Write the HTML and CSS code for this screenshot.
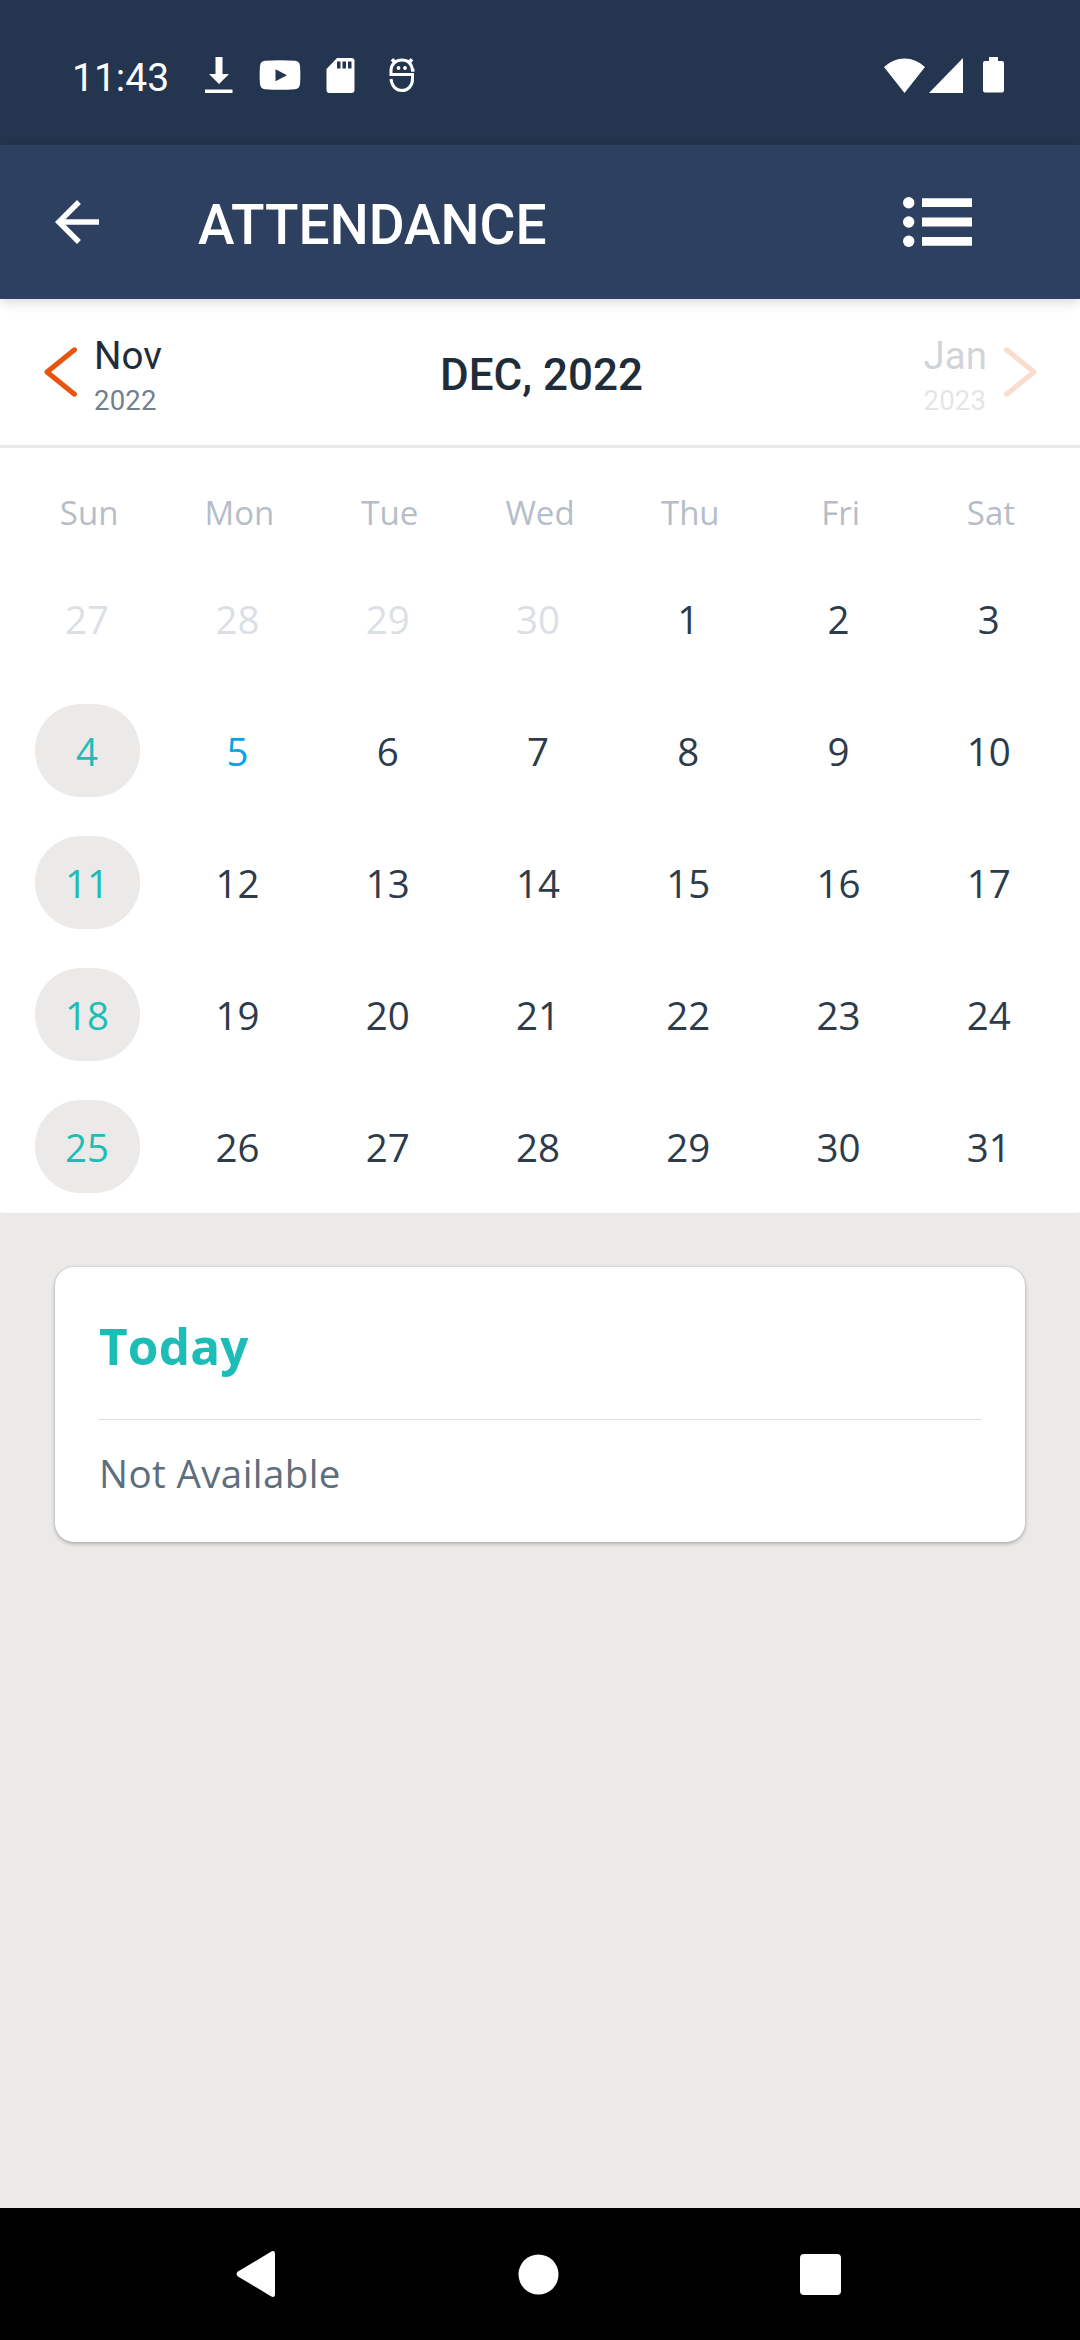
FILE: index.html
```html
<!DOCTYPE html>
<html lang="en">
<head>
<meta charset="utf-8">
<title>Attendance</title>
<link rel="stylesheet" href="styles.css">
</head>
<body>
<div class="screen">
  <header class="status-bar">
    <span class="clock">11:43</span>
    <svg class="icon-download" width="28" height="36" viewBox="0 0 28 36"><path d="M10.500 0h7v17H24L14 27 4 17h6.500zM0 32.500h27.500v3.500H0z"/></svg>
    <svg class="icon-video" width="42" height="30" viewBox="0 0 42 30"><path fill-rule="evenodd" d="M6 .8Q21-.4 36 .8Q40.500 1.200 41 6Q41.700 15 41 24Q40.500 28.800 36 29.200Q21 30.400 6 29.200Q1.500 28.800 1 24Q.3 15 1 6Q1.500 1.200 6 .8zM16.500 9.300v12L28 15.300z"/></svg>
    <svg class="icon-card" width="29" height="35" viewBox="0 0 29 35"><path fill-rule="evenodd" d="M11 0h14.500q3 0 3 3v29q0 3-3 3H3.500q-3 0-3-3V11zM11 3.500v7h3.500v-7zM16.500 3.500v7H20v-7zM22 3.500v7h3.500v-7z"/></svg>
    <svg class="icon-bot" width="26" height="36" viewBox="0 0 26 36"><g fill="none" stroke="#fff" stroke-width="3"><path d="M25.500 13.200h-2C22.500 6 19 3 13 3S2 7 2 13.500V17.500H23.500V22C23.500 29 19 33.500 13 33.500S2.800 29 2 22"/><path d="M6 5.500 3 2.200M20 5.500 23 2.200" stroke-width="3.500"/></g><circle cx="9.500" cy="11" r="1.900"/><circle cx="16" cy="11" r="1.900"/></svg>
    <span class="spacer"></span>
    <svg class="icon-wifi" width="42" height="35" viewBox="0 0 42 35"><path d="M0 9Q9 .5 20.500.5T41 9L20.500 35z"/></svg>
    <svg class="icon-signal" width="34" height="35" viewBox="0 0 34 35"><path d="M34 0v35H0z"/></svg>
    <svg class="icon-battery" width="21" height="36" viewBox="0 0 21 36"><path d="M6 0h9v4h4q2 0 2 2v27.500q0 2-2 2H2q-2 0-2-2V6q0-2 2-2h4z"/></svg>
  </header>

  <div class="app-bar">
    <svg class="icon-back" width="66" height="66" viewBox="0 0 24 24"><path d="M20 11H7.830l5.590-5.590L12 4l-8 8 8 8 1.410-1.410L7.830 13H20v-2z"/></svg>
    <h1 class="title">ATTENDANCE</h1>
    <svg class="icon-list" width="70" height="50" viewBox="0 0 70 50"><circle cx="5.700" cy="5.700" r="5.700"/><circle cx="5.700" cy="25" r="5.700"/><circle cx="5.700" cy="44.300" r="5.700"/><path d="M19 1.200h50V10H19zM19 20.600h50v8.800H19zM19 40h50v8.800H19z"/></svg>
  </div>

  <nav class="month-nav">
    <div class="month-step">
      <svg width="35" height="52" viewBox="0 0 35 52"><path class="chevron" d="M31.500 3.800 4 26l27.500 22.200"/></svg>
      <div class="month-label"><span class="month">Nov</span><span class="year">2022</span></div>
    </div>
    <h2 class="current">DEC, 2022</h2>
    <div class="month-step disabled">
      <div class="month-label"><span class="month">Jan</span><span class="year">2023</span></div>
      <svg width="35" height="52" viewBox="0 0 35 52"><path class="chevron" d="M3.500 3.800 31 26 3.500 48.200"/></svg>
    </div>
  </nav>

  <section class="calendar">
    <div class="weekdays"><span>Sun</span><span>Mon</span><span>Tue</span><span>Wed</span><span>Thu</span><span>Fri</span><span>Sat</span></div>
    <div class="days">
      <span class="other">27</span><span class="other">28</span><span class="other">29</span><span class="other">30</span><span>1</span><span>2</span><span>3</span>
      <span class="holiday">4</span><span class="today">5</span><span>6</span><span>7</span><span>8</span><span>9</span><span>10</span>
      <span class="holiday">11</span><span>12</span><span>13</span><span>14</span><span>15</span><span>16</span><span>17</span>
      <span class="holiday">18</span><span>19</span><span>20</span><span>21</span><span>22</span><span>23</span><span>24</span>
      <span class="holiday">25</span><span>26</span><span>27</span><span>28</span><span>29</span><span>30</span><span>31</span>
    </div>
  </section>

  <main class="details">
    <article class="card">
      <h3 class="card-title">Today</h3>
      <p class="card-text">Not Available</p>
    </article>
  </main>

  <footer class="system-nav">
    <svg width="40" height="46" viewBox="0 0 40 46"><path d="M34.500 1Q39 -1.500 39 3v40q0 4.500-4.500 2L2 25.500q-3-2.500 0-5z"/></svg>
    <svg width="41" height="41" viewBox="0 0 41 41"><circle cx="20.500" cy="20.500" r="20"/></svg>
    <svg width="41" height="41" viewBox="0 0 41 41"><rect width="41" height="41" rx="4"/></svg>
  </footer>
</div>
</body>
</html>
```
FILE: styles.css
```css
* {
  box-sizing: border-box;
}

body,
h1,
h2,
h3,
p {
  margin: 0;
}

body {
  font-family: Roboto, sans-serif;
}

svg {
  display: block;
  flex: none;
  fill: #fff;
}

.screen {
  display: flex;
  flex-direction: column;
  width: 1080px;
  height: 2340px;
  background: #ebeae8;
}

.status-bar {
  display: flex;
  align-items: center;
  height: 145px;
  padding: 5px 76px 0 72px;
  background: #24354f;
}

.clock {
  width: 133px;
  padding-top: 5px;
  color: #fff;
  font-size: 39px;
  line-height: 46px;
}

.icon-video {
  margin-left: 26px;
}

.icon-card {
  margin-left: 25px;
}

.icon-bot {
  margin-left: 34px;
}

.spacer {
  flex: 1;
}

.icon-signal {
  margin: 0 20px 0 3px;
}

.app-bar {
  display: flex;
  position: relative;
  align-items: center;
  height: 154px;
  padding: 0 107px 0 44px;
  background: #2d4060;
  box-shadow: 0 2px 12px rgba(0, 0, 0, 0.18);
}

.title {
  flex: 1;
  padding: 6px 0 0 88px;
  color: #fff;
  font-size: 55px;
  font-weight: 500;
  line-height: 64px;
}

.month-nav {
  display: grid;
  grid-template-columns: 1fr auto 1fr;
  align-items: start;
  height: 149px;
  padding: 0 42px 0 43px;
  border-bottom: 3px solid #e9e9ea;
  background: #fff;
}

.month-step {
  display: flex;
  gap: 16px;
  padding-top: 35px;
}

.month-step svg {
  margin-top: 12px;
}

.month-step.disabled {
  justify-content: flex-end;
  opacity: 0.2;
}

.month-label {
  display: flex;
  flex-direction: column;
}

.month {
  color: #1f2d3a;
  font-size: 38.500px;
  line-height: 44px;
}

.year {
  color: #708090;
  font-size: 27.500px;
  letter-spacing: 0.2px;
  line-height: 45px;
}

.disabled .year {
  color: #7a828c;
}

.chevron {
  fill: none;
  stroke: #e65410;
  stroke-width: 5;
  stroke-linecap: round;
  stroke-linejoin: round;
}

.current {
  padding: 50px 0 0 2px;
  color: #1f2d3a;
  font-size: 44px;
  font-weight: 500;
  line-height: 52px;
}

.calendar {
  height: 765px;
  padding-top: 43px;
  border-radius: 0 0 15px 15px / 0 0 1px 1px;
  background: #fff;
  font-family: "Open Sans", sans-serif;
}

.weekdays,
.days {
  display: grid;
  grid-template-columns: repeat(7, 150.300px);
  justify-content: center;
  text-align: center;
}

.weekdays {
  color: #b6bdc9;
  font-size: 33px;
  line-height: 44px;
}

.days {
  grid-auto-rows: 93px;
  row-gap: 39px;
  padding: 37px 4px 0 0;
  color: #2d3b4a;
  font-size: 38.500px;
  line-height: 95px;
}

.days span {
  width: 105px;
  height: 93px;
  justify-self: center;
}

.days .other {
  color: #dbe0e6;
}

.days .today {
  color: #08a3e8;
}

.days .holiday {
  border-radius: 46px;
  background: #ebeae9;
  color: #1fbcb5;
}

.details {
  flex: 1;
  padding: 54px 55px;
  font-family: "Open Sans", sans-serif;
}

.card {
  height: 275px;
  padding: 46px 44px 0;
  border-radius: 19px;
  background: #fff;
  box-shadow: 0 2px 4px rgba(0, 0, 0, 0.24), 0 0 3px rgba(0, 0, 0, 0.1);
}

.card-title {
  height: 107px;
  border-bottom: 1px solid #dedfe0;
  color: #1cbdb6;
  font-size: 49.500px;
  font-weight: 700;
  letter-spacing: 0.2px;
  line-height: 66px;
}

.card-text {
  padding-top: 27px;
  color: #5f6e7c;
  font-size: 38.500px;
  letter-spacing: 0.400px;
  line-height: 52px;
}

.system-nav {
  display: flex;
  align-items: center;
  justify-content: space-between;
  height: 132px;
  padding: 0 239px 0 236px;
  background: #000;
}
```
